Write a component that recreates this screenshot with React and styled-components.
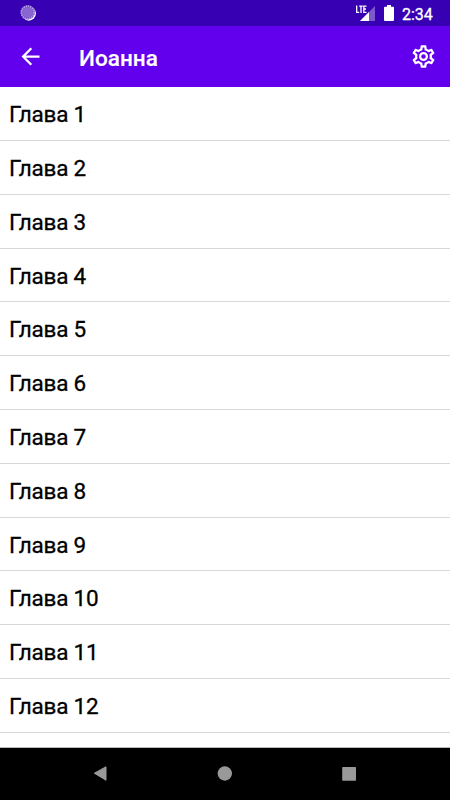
import React from 'react';
import styled, { createGlobalStyle } from 'styled-components';

const Global = createGlobalStyle`
  * { box-sizing: border-box; }
  body { margin: 0; background: #fff; font-family: Roboto, sans-serif; overflow: hidden; }
`;

const Screen = styled.main`
  width: 450px;
  height: 800px;
  display: flex;
  flex-direction: column;
  overflow: hidden;
  background: #fff;
`;

const StatusBar = styled.header`
  height: 26px;
  flex: none;
  display: flex;
  align-items: center;
  background: #3700b3;
  color: #fff;
`;

const SyncIcon = styled.svg`
  width: 16px;
  height: 16px;
  margin-left: 20px;
`;

const SystemIcons = styled.svg`
  width: 46px;
  height: 26px;
  margin-left: auto;
`;

const Clock = styled.time`
  width: 50px;
  padding: 3px 0 0 2px;
  font-size: 16px;
  font-weight: 400;
  line-height: 24px;
  -webkit-text-stroke: 0.3px currentColor;
`;

const AppBar = styled.header`
  height: 61px;
  flex: none;
  display: flex;
  align-items: center;
  padding: 0 13px 0 17px;
  background: #6200ee;
  color: #fff;
`;

const ActionIcon = styled.svg`
  width: 27px;
  height: 27px;
  flex: none;
`;

const Title = styled.h1`
  margin: 4px auto 0 35px;
  font-size: 22.6px;
  font-weight: 500;
  line-height: 30px;
  -webkit-text-stroke: 0.15px currentColor;
`;

const ChapterList = styled.ul`
  height: 661px;
  margin: 0;
  padding: 0.2px 0 0;
  list-style: none;
  overflow: hidden;
  border-bottom: 1px solid #b9b9b9;
`;

const Chapter = styled.li`
  height: 53.8px;
  padding: 1px 9px 0;
  border-bottom: 1px solid #d8d8d8;
  color: #000;
  font-size: 22.5px;
  font-weight: 400;
  letter-spacing: -0.2px;
  line-height: 53px;
  -webkit-text-stroke: 0.3px currentColor;
`;

const NavigationBar = styled.nav`
  height: 52px;
  flex: none;
  background: #000;
`;

const NavigationIcons = styled.svg`
  display: block;
`;

const chapters = Array.from({ length: 12 }, (_, i) => i + 1);

export default function App() {
  return (
    <Screen>
      <Global />
      <StatusBar>
        <SyncIcon viewBox="0 0 16 16">
          <circle cx="8.8" cy="8.6" r="7.1" fill="#fff" />
          <circle cx="7.7" cy="7.4" r="7.2" fill="#7450c4" />
          <circle cx="7.7" cy="7.4" r="6.2" fill="none" stroke="#b49ee1" strokeWidth="1.9" strokeDasharray="1.3 0.9" />
          <circle cx="7.7" cy="7.4" r="5" fill="#8a66d2" />
        </SyncIcon>
        <SystemIcons viewBox="354 0 46 26" fill="#fff">
          <path d="M375 6v15h-15Z" opacity=".35" />
          <path d="M355 4h12v9h-12Z" fill="#3700b3" />
          <path d="M369 12v9h-9Z" />
          <path d="M356.7 5.5v6.8h2.5M359.2 6.1h3.5M361 6V13M366.5 6.1h-2.7v6.2h2.7M364 9h2" fill="none" stroke="#fff" strokeWidth="1.3" />
          <path d="M387 5h4v1.7h2q1 0 1 1V20q0 1-1 1h-8q-1 0-1-1V7.7q0-1 1-1h2Z" />
        </SystemIcons>
        <Clock>2:34</Clock>
      </StatusBar>
      <AppBar>
        <ActionIcon viewBox="0 0 24 24" fill="currentColor">
          <path d="M20 11H7.83l5.59-5.59L12 4l-8 8 8 8 1.41-1.41L7.83 13H20v-2z" />
        </ActionIcon>
        <Title>Иоанна</Title>
        <ActionIcon viewBox="0 0 24 24" fill="currentColor">
          <path d="M19.43 12.98c.04-.32.07-.64.07-.98s-.03-.66-.07-.98l2.11-1.65c.19-.15.24-.42.12-.64l-2-3.46c-.12-.22-.39-.3-.61-.22l-2.49 1c-.52-.4-1.08-.73-1.69-.98l-.38-2.65A.488.488 0 0 0 14 2h-4c-.25 0-.46.18-.49.42l-.38 2.65c-.61.25-1.17.59-1.69.98l-2.49-1c-.23-.09-.49 0-.61.22l-2 3.46c-.13.22-.07.49.12.64l2.11 1.65c-.04.32-.07.65-.07.98s.03.66.07.98l-2.11 1.65c-.19.15-.24.42-.12.64l2 3.46c.12.22.39.3.61.22l2.49-1c.52.4 1.08.73 1.69.98l.38 2.65c.03.24.24.42.49.42h4c.25 0 .46-.18.49-.42l.38-2.65c.61-.25 1.17-.59 1.69-.98l2.49 1c.23.09.49 0 .61-.22l2-3.46c.12-.22.07-.49-.12-.64l-2.11-1.65zm-1.98-1.71c.04.31.05.52.05.73 0 .21-.02.43-.05.73l-.14 1.13.89.7 1.08.84-.7 1.21-1.27-.51-1.04-.42-.9.68c-.43.32-.84.56-1.25.73l-1.06.43-.16 1.13-.2 1.35h-1.4l-.19-1.35-.16-1.13-1.06-.43c-.43-.18-.83-.41-1.23-.71l-.91-.7-1.06.43-1.27.51-.7-1.21 1.08-.84.89-.7-.14-1.13c-.03-.31-.05-.54-.05-.74s.02-.43.05-.73l.14-1.13-.89-.7-1.08-.84.7-1.21 1.27.51 1.04.42.9-.68c.43-.32.84-.56 1.25-.73l1.06-.43.16-1.13.2-1.35h1.39l.19 1.35.16 1.13 1.06.43c.43.18.83.41 1.23.71l.91.7 1.06-.43 1.27-.51.7 1.21-1.07.85-.89.7.14 1.13zM12 8a4 4 0 1 0 0 8 4 4 0 0 0 0-8zm0 6a2 2 0 1 1 0-4 2 2 0 0 1 0 4z" />
        </ActionIcon>
      </AppBar>
      <ChapterList>
        {chapters.map((n) => <Chapter key={n}>Глава {n}</Chapter>)}
      </ChapterList>
      <NavigationBar>
        <NavigationIcons width="450" height="52" viewBox="0 748 450 52" fill="#999">
          <path d="M94.3 773.2 106 766.8v13.4Z" stroke="#999" strokeWidth="1" strokeLinejoin="round" />
          <circle cx="224.8" cy="773.5" r="7.2" />
          <rect x="342.2" y="767" width="13.8" height="13.8" rx=".7" />
        </NavigationIcons>
      </NavigationBar>
    </Screen>
  );
}
